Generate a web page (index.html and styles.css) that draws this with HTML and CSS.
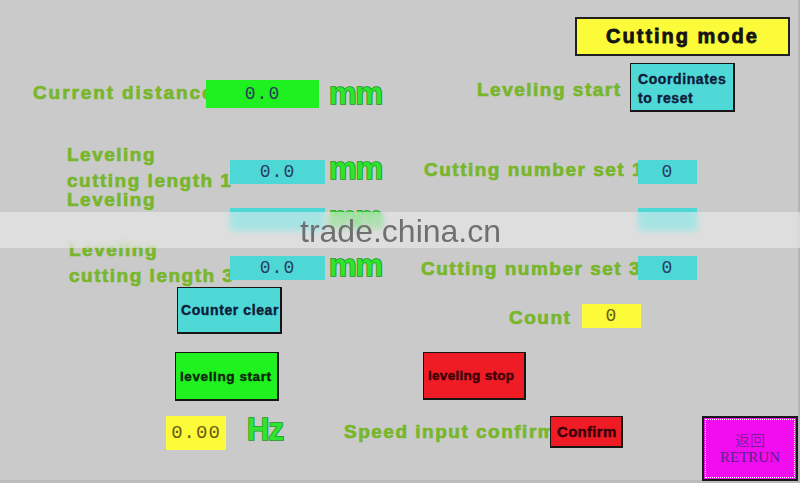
FILE: index.html
```html
<!DOCTYPE html>
<html lang="en">
<head>
  <meta charset="UTF-8" />
  <title>Cutting mode</title>
  <link rel="stylesheet" href="styles.css">
</head>
<body>

  <div class="screen">
    <!-- HMI panel: widgets sit where the panel designer dropped them -->
    <div class="title-box">Cutting mode</div>

    <div class="label lbl-distance">Current distance</div>
    <div class="field field-green f-distance">0.0</div>
    <div class="unit u-distance">mm</div>

    <div class="label lbl-level-start">Leveling start</div>
    <button class="btn btn-cyan btn-coords">Coordinates<br>to reset</button>

    <div class="label two-line lbl-len1">Leveling<br>cutting length 1</div>
    <div class="field field-cyan f-len1">0.0</div>
    <div class="unit u-len1">mm</div>
    <div class="label lbl-num1">Cutting number set 1</div>
    <div class="field field-cyan f-num1">0</div>

    <div class="label lbl-len2">Leveling</div>
    <div class="field field-cyan f-len2"></div>
    <div class="unit u-len2">mm</div>
    <div class="field field-cyan f-num2"></div>

    <div class="label two-line lbl-len3">Leveling<br>cutting length 3</div>
    <div class="field field-cyan f-len3">0.0</div>
    <div class="unit u-len3">mm</div>
    <div class="label lbl-num3">Cutting number set 3</div>
    <div class="field field-cyan f-num3">0</div>

    <button class="btn btn-cyan btn-counter">Counter clear</button>
    <div class="label lbl-count">Count</div>
    <div class="field field-yellow f-count">0</div>

    <button class="btn btn-green btn-lev-start">leveling start</button>
    <button class="btn btn-red btn-lev-stop">leveling stop</button>

    <div class="field field-yellow f-speed">0.00</div>
    <div class="unit u-hz">Hz</div>
    <div class="label lbl-speed">Speed input confirm</div>
    <button class="btn btn-red btn-confirm">Confirm</button>

    <button class="btn-return">
      <span>返回</span>
      <span>RETRUN</span>
    </button>

    <div class="watermark">trade.china.cn</div>
  </div>

</body>
</html>
```

FILE: styles.css
```css
* {
  box-sizing: border-box;
  margin: 0;
  padding: 0;
}

body {
  width: 800px;
  height: 483px;
  overflow: hidden;
  background: #c9c9c9;
  font-family: 'Liberation Sans', Arial, sans-serif;
}

.screen {
  position: relative;
  width: 800px;
  height: 483px;
  background: #cacaca;
  border-right: 2px solid #b4b4b4;
  border-bottom: 3px solid #bcbcbc;
}

/* ---- generic widgets ---- */

.label {
  position: absolute;
  color: #78b62b;
  font-size: 19px;
  font-weight: bold;
  letter-spacing: 1.5px;
  line-height: 20px;
  white-space: nowrap;
  -webkit-text-stroke: 0.7px #78b62b;
}

.label.two-line {
  line-height: 26px;
}

.field {
  position: absolute;
  font-family: 'Liberation Mono', 'DejaVu Sans Mono', monospace;
  font-size: 18px;
  color: #2c3c5c;
  text-align: center;
  letter-spacing: 1px;
}

.field-green { background: #1ff01f; }
.field-cyan { background: #4dd8d6; }
.field-yellow { background: #fbfb3a; color: #6a5a10; }

.unit {
  position: absolute;
  font-size: 31px;
  font-weight: bold;
  color: #2ee42e;
  -webkit-text-stroke: 1.6px #15961a;
  paint-order: stroke fill;
  line-height: 26px;
  letter-spacing: -1px;
}

.btn {
  position: absolute;
  border: 2px solid #161616;
  border-top-width: 1px;
  border-left-width: 1px;
  font-family: 'Liberation Sans', Arial, sans-serif;
  font-weight: bold;
  text-align: left;
  overflow: hidden;
  white-space: nowrap;
  cursor: pointer;
}

.btn-cyan { background: #4fd9d6; color: #0e1c3a; -webkit-text-stroke: 0.4px #0e1c3a; }
.btn-green { background: #1ff21f; color: #0b260b; -webkit-text-stroke: 0.4px #0b260b; }
.btn-red { background: #ef1c26; color: #3a0008; -webkit-text-stroke: 0.4px #3a0008; }

/* ---- placement on the panel ---- */

.title-box {
  position: absolute;
  left: 575px;
  top: 17px;
  width: 215px;
  height: 39px;
  background: #fbfb3a;
  border: 2px solid #202020;
  font-size: 20px;
  font-weight: bold;
  letter-spacing: 2px;
  text-align: center;
  line-height: 35px;
  color: #141414;
  -webkit-text-stroke: 0.8px #141414;
}

.lbl-distance { left: 33px; top: 83px; letter-spacing: 1.9px; }
.f-distance { left: 206px; top: 80px; width: 113px; height: 28px; line-height: 28px; }
.u-distance { left: 329px; top: 81px; }

.lbl-level-start { left: 477px; top: 80px; }
.btn-coords {
  left: 630px;
  top: 63px;
  width: 105px;
  height: 49px;
  font-size: 14px;
  line-height: 19px;
  padding: 4px 0 0 7px;
  letter-spacing: 0.6px;
}

.lbl-len1 { left: 67px; top: 142px; }
.f-len1 { left: 230px; top: 160px; width: 95px; height: 24px; line-height: 24px; }
.u-len1 { left: 329px; top: 156px; }
.lbl-num1 { left: 424px; top: 160px; }
.f-num1 { left: 638px; top: 160px; width: 59px; height: 24px; line-height: 24px; }

.lbl-len2 { left: 67px; top: 193px; line-height: 14px; }
.f-len2 { left: 230px; top: 208px; width: 95px; height: 23px; }
.u-len2 { left: 329px; top: 205px; }
.f-num2 { left: 638px; top: 208px; width: 59px; height: 23px; }

.lbl-len3 { left: 69px; top: 237px; }
.f-len3 { left: 230px; top: 256px; width: 95px; height: 24px; line-height: 24px; }
.u-len3 { left: 329px; top: 253px; }
.lbl-num3 { left: 421px; top: 259px; }
.f-num3 { left: 638px; top: 256px; width: 59px; height: 24px; line-height: 24px; }

.btn-counter {
  left: 177px;
  top: 287px;
  width: 105px;
  height: 47px;
  font-size: 14px;
  padding-left: 3px;
  letter-spacing: 0.6px;
}

.lbl-count { left: 509px; top: 308px; }
.f-count { left: 582px; top: 304px; width: 59px; height: 24px; line-height: 24px; }

.btn-lev-start {
  left: 175px;
  top: 352px;
  width: 104px;
  height: 49px;
  font-size: 13.5px;
  padding-left: 4px;
  letter-spacing: 0.6px;
}

.btn-lev-stop {
  left: 423px;
  top: 352px;
  width: 103px;
  height: 48px;
  font-size: 13.5px;
  padding-left: 4px;
  letter-spacing: 0.3px;
}

.f-speed { left: 166px; top: 416px; width: 60px; height: 34px; line-height: 34px; font-size: 19px; }
.u-hz { left: 247px; top: 417px; font-size: 31px; }
.lbl-speed { left: 344px; top: 422px; }

.btn-confirm {
  left: 550px;
  top: 416px;
  width: 73px;
  height: 32px;
  font-size: 15px;
  padding-left: 6px;
  letter-spacing: 0.3px;
}

.btn-return {
  position: absolute;
  left: 702px;
  top: 416px;
  width: 96px;
  height: 65px;
  background: #f20cf0;
  border: 2px solid #1a1a1a;
  outline: 1px dotted #ffffff;
  outline-offset: -4px;
  display: flex;
  flex-direction: column;
  align-items: center;
  justify-content: center;
  gap: 1px;
  font-family: 'Liberation Serif', 'Noto Sans CJK SC', serif;
  font-size: 15px;
  color: #5e2285;
  line-height: 16px;
  cursor: pointer;
}

.btn-return span:first-child {
  font-family: 'Noto Sans CJK SC', sans-serif;
  font-weight: 300;
}

/* the site's watermark strip lies over the panel */
.watermark {
  position: absolute;
  left: 0;
  top: 212px;
  width: 800px;
  height: 36px;
  background: rgba(238, 238, 238, 0.55);
  backdrop-filter: blur(3px);
  -webkit-backdrop-filter: blur(3px);
  font-size: 32px;
  color: #6f6f6f;
  line-height: 38px;
  padding-left: 300px;
}
```
